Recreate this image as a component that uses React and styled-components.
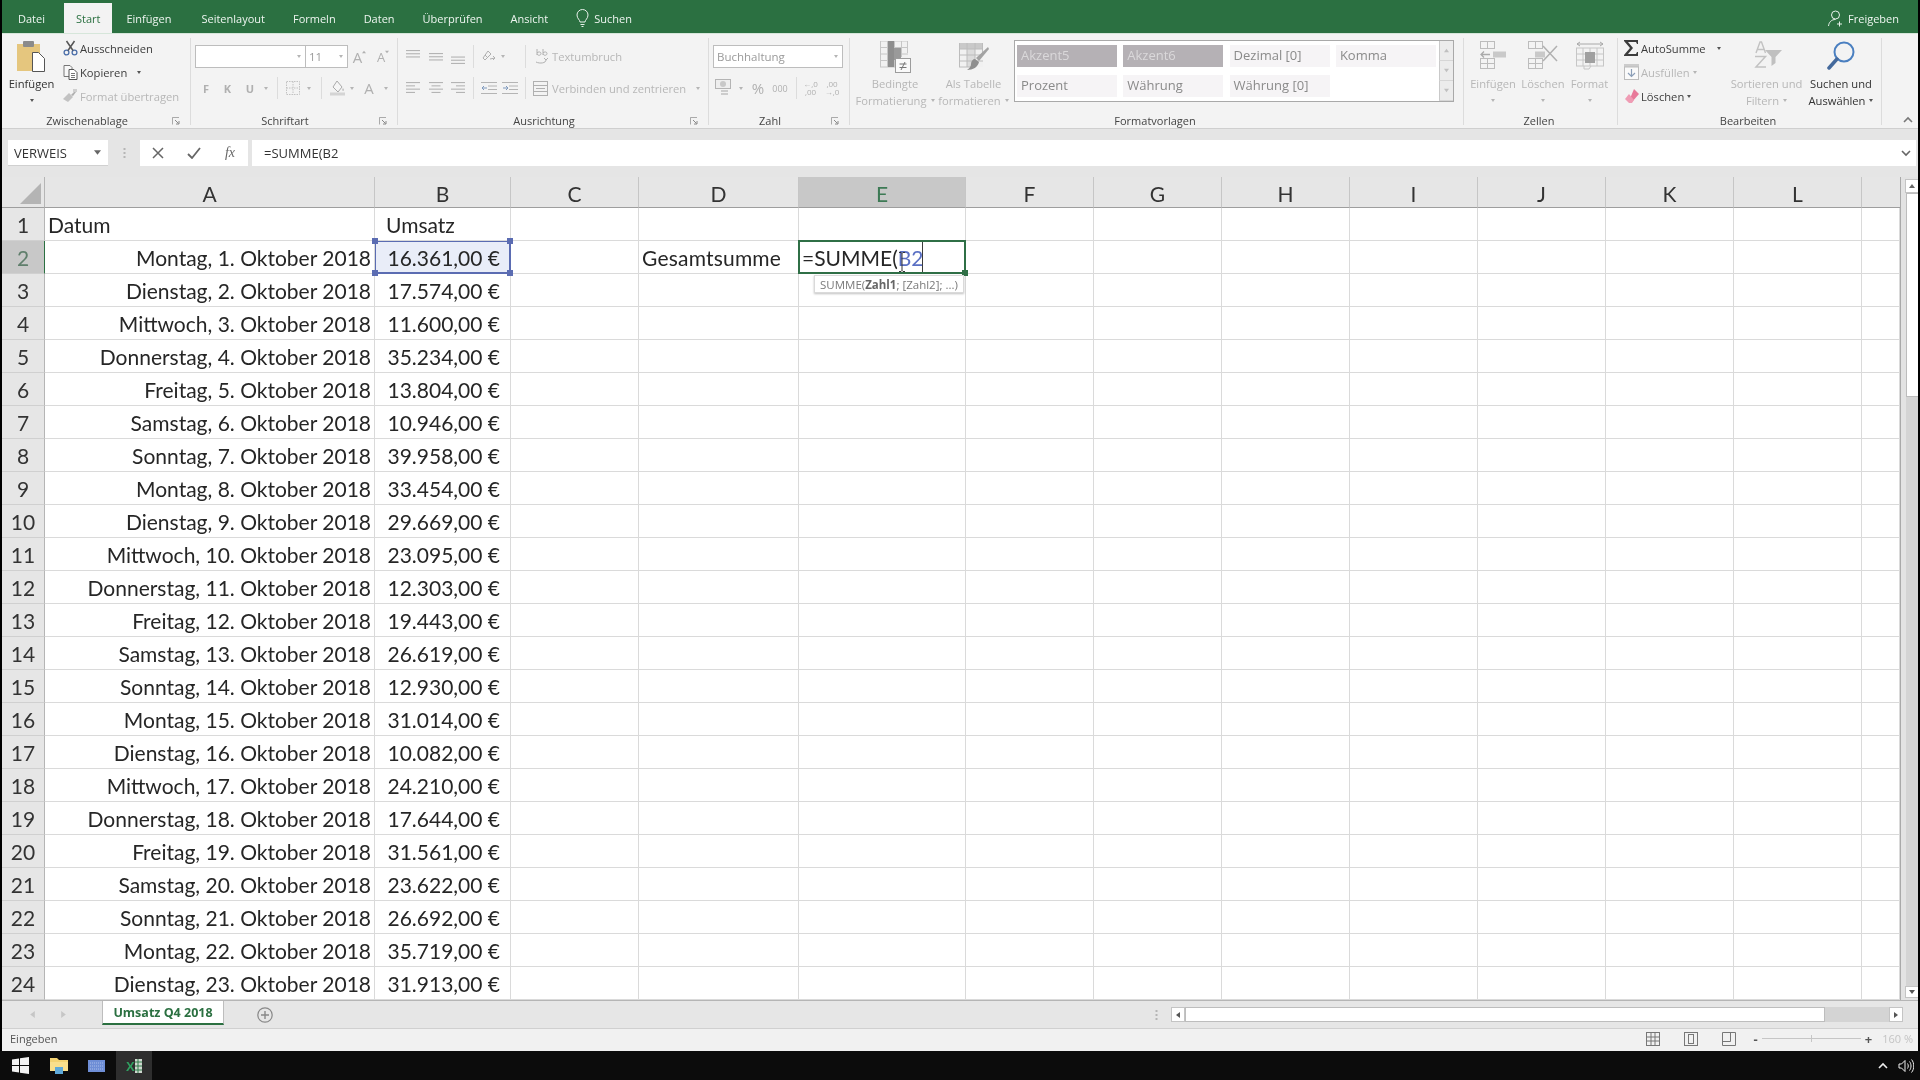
import React from "react";
import styled, { createGlobalStyle } from "styled-components";

const Global = createGlobalStyle`
  html, body { margin: 0; padding: 0; background: #000; }
  * { box-sizing: border-box; }
`;

const UI = `"Open Sans", "Liberation Sans", sans-serif`;
const SHEET = `Lato, "Liberation Sans", sans-serif`;
const GREEN = "#2b7041";
const COLS = "43px 330px 136px 128px 160px 167px repeat(7, 128px) 38px";

const Page = styled.div`
  width: 1920px; height: 1080px; background: #000; padding: 0 2px; overflow: hidden;
  display: flex; flex-direction: column; font-family: ${UI}; filter: blur(0.55px);
`;

/* title tabs */
const TabBar = styled.div`
  height: 33px; flex: none; background: ${GREEN}; display: flex; align-items: flex-end;
  padding-left: 2px; color: #eef5f0; font-size: 11px;
`;
const Tab = styled.div`
  height: 30px; display: flex; align-items: center; padding: 0 ${p => p.$pad ?? 14}px; gap: 5px;
  margin-left: ${p => p.$ml ?? 0}px;
  ${p => p.$active && `background:#f3f3f3;color:#2b7041;`}
  ${p => p.$right && `margin-left:auto;padding-right:19px;`}
`;

/* ribbon */
const Ribbon = styled.div`
  height: 96px; flex: none; background: #f3f3f3; padding-top: 4px; display: flex;
  border-top: 1px solid #d6e6da; border-bottom: 1px solid #cfcfcf; font-size: 11.2px; color: #3c3c3c;
`;
const Group = styled.div`
  width: ${p => p.$w}px; height: 87px; flex: none; display: flex; flex-direction: column;
  border-right: 1px solid #dcdcdc;
`;
const GroupBody = styled.div`
  height: 74px; display: flex; padding-left: ${p => p.$pl ?? 0}px;
`;
const GroupFoot = styled.div`
  height: 17px; margin-bottom: -4px; display: flex; align-items: center; padding-right: 3px;
`;
const GroupLabel = styled.div`
  flex: 1; text-align: center; color: #444; font-size: 11px; line-height: 16px;
`;
const LauncherBox = styled.div`
  width: 15px; height: 17px; display: flex; align-items: center;
`;
const RibbonTail = styled.div`
  flex: 1; height: 86px; display: flex; align-items: flex-end; padding: 0 0 1px 21px;
`;

const Stack = styled.div`
  width: ${p => p.$w}px; flex: none; margin-top: -2px; display: flex; flex-direction: column;
`;
const SmallBtn = styled.div`
  height: 24px; display: flex; align-items: center; white-space: nowrap;
  color: ${p => (p.$muted ? "#b7b7b7" : "#3c3c3c")};
`;
const SmallIcon = styled.div`
  width: 18px; height: 24px; margin-right: 1px; flex: none; display: flex; align-items: center; justify-content: center;
`;
const Big = styled.div`
  width: ${p => p.$w}px; flex: none; padding-top: 3px; display: flex; flex-direction: column; align-items: center;
  color: ${p => (p.$muted ? "#b7b7b7" : "#333")}; white-space: nowrap;
`;
const BigIcon = styled.div`
  height: 35px; display: flex; align-items: flex-start; justify-content: center;
`;
const BigLine = styled.div`
  height: 16.5px; line-height: 16.5px; display: flex; align-items: center; gap: 4px;
`;
const Caret = styled.span`
  display: inline-block; width: 0; height: 0; flex: none;
  border-left: 2.5px solid transparent; border-right: 2.5px solid transparent;
  border-top: 3px solid ${p => (p.$muted ? "#b5b5b5" : "#555")};
  margin-left: ${p => p.$ml ?? 0}px;
`;
const Rows = styled.div`
  display: flex; flex-direction: column; padding-top: 7px;
`;
const Row1 = styled.div`
  height: 23px; display: flex; align-items: center; margin-bottom: 9px;
`;
const Row2 = styled.div`
  height: 22px; display: flex; align-items: center;
`;
const Slot = styled.div`
  width: ${p => p.$w}px; height: 100%; flex: none; display: flex; align-items: center; justify-content: center;
  color: #b0b0b0; font-size: ${p => p.$fs ?? 11}px; font-weight: ${p => p.$fw ?? 400};
`;
const GrowMark = styled.span`
  display: flex; margin: -9px 0 0 0;
`;
const DecStack = styled.div`
  display: flex; flex-direction: column; align-items: center; font-size: 8px; line-height: 8px; color: #b0b0b0;
`;
const SepSlot = styled.div`
  width: ${p => p.$w}px; height: 100%; flex: none; display: flex; justify-content: center; margin-left: ${p => p.$ml ?? 0}px;
  &::after { content: ""; width: 1px; height: 100%; background: #dcdcdc; }
`;
const Combo = styled.div`
  width: ${p => p.$w}px; height: 23px; flex: none; background: #fff; border: 1px solid #bdbdbd;
  margin-left: ${p => p.$ml ?? 0}px;
  display: flex; align-items: center; justify-content: space-between; padding: 0 4px 0 3px;
  color: #9a9a9a; font-size: 11.5px;
`;
const MutedText = styled.span`
  color: #b7b7b7; white-space: nowrap; margin-left: ${p => p.$ml ?? 0}px;
`;
const Gallery = styled.div`
  width: 440px; height: 62px; flex: none; margin: 2px 0 0 3px; background: #fff; border: 1px solid #a9a9a9;
  display: flex;
`;
const GalleryCells = styled.div`
  flex: 1; display: grid; grid-template-columns: repeat(4, 100px); column-gap: 6.3px; row-gap: 8px;
  grid-auto-rows: 22px; padding: 4px 0 0 2px; align-content: start;
`;
const StyleCell = styled.div`
  background: ${p => (p.$dark ? "#b5b1b5" : "#f6f4f6")}; color: ${p => (p.$dark ? "#dad8da" : "#8a8a8a")};
  font-size: 13px; line-height: 21px; padding-left: 4px;
`;
const GalleryScroll = styled.div`
  width: 14px; flex: none; display: flex; flex-direction: column;
`;
const GalleryArrow = styled.div`
  flex: 1; background: #ececec; border-left: 1px solid #c9c9c9; border-bottom: 1px solid #d6d6d6;
  display: flex; align-items: center; justify-content: center;
`;

/* formula bar */
const FormulaBar = styled.div`
  height: 48px; flex: none; background: #e5e5e5; padding: 11px 0 0 6px; display: flex; align-items: flex-start;
  font-size: 13px; color: #333;
`;
const NameBox = styled.div`
  width: 100px; height: 26px; background: #fff; border-bottom: 1px solid #d0d0d0; display: flex; align-items: center;
  justify-content: space-between; padding: 0 7px 0 6px; flex: none;
`;
const Dots = styled.div`
  width: 32px; height: 26px; flex: none; display: flex; align-items: center; justify-content: center;
`;
const FxButtons = styled.div`
  width: 108px; height: 26px; flex: none; background: #fff; display: flex; align-items: center;
`;
const FxBtn = styled.div`
  width: 36px; display: flex; justify-content: center; color: #666;
  font-family: "Liberation Serif", serif; font-style: italic; font-size: 14px;
`;
const FormulaInput = styled.div`
  flex: 1; height: 26px; margin: 0 2px 0 4px; background: #fff; display: flex; align-items: center;
  justify-content: space-between; padding: 0 5px 0 12px;
`;

/* sheet */
const SheetArea = styled.div`
  height: 823px; flex: none; display: flex; background: #fff;
`;
const Sheet = styled.div`
  width: 1898px; flex: none; font-family: ${SHEET}; font-size: 21px; color: #262626;
`;
const Row = styled.div`
  display: grid; grid-template-columns: ${COLS}; height: ${p => p.$h ?? 33}px;
`;
const Corner = styled.div`
  background: #e6e6e6; border-right: 1px solid #b5b5b5; border-bottom: 1px solid #9e9e9e;
  display: flex; align-items: flex-end; justify-content: flex-end; padding: 0 3px 3px 0;
`;
const ColHead = styled.div`
  background: ${p => (p.$active ? "#c8c8c8" : "#e6e6e6")}; color: ${p => (p.$active ? "#3d7a55" : "#333")};
  border-right: 1px solid #c6c6c6; border-bottom: 1px solid #9e9e9e;
  display: flex; align-items: center; justify-content: center; padding-top: 2px;
  ${p => p.$last && "border-right:none;"}
`;
const RowHead = styled.div`
  background: ${p => (p.$active ? "#c8c8c8" : "#e6e6e6")}; color: ${p => (p.$active ? "#607f6c" : "#333")};
  border-right: 1px solid ${p => (p.$active ? "#2b7041" : "#b5b5b5")}; border-bottom: 1px solid #d0d0d0;
  display: flex; align-items: center; justify-content: center; padding-top: 1px;
`;
const Cell = styled.div`
  border-right: 1px solid #dadada; border-bottom: 1px solid #dadada; position: relative;
  display: flex; align-items: center; white-space: nowrap; padding-top: 1px;
  justify-content: ${p => (p.$right ? "flex-end" : "flex-start")};
  padding-left: ${p => p.$pl ?? 3}px; padding-right: ${p => p.$pr ?? 3}px;
  letter-spacing: ${p => p.$ls ?? 0}px;
  ${p => p.$selected && `background:#e9edf8; z-index:2; box-shadow: inset 0 0 0 1px #5b6cb2; border-color:#5b6cb2;`}
  ${p => p.$over && `z-index:3;`}
`;
const Handle = styled.span`
  position: absolute; width: 6px; height: 6px; background: #5b6cb2;
  ${p => (p.$v === "t" ? "top:-3px;" : "bottom:-3px;")}
  ${p => (p.$h === "l" ? "left:-3px;" : "right:-3px;")}
`;
const EditBox = styled.div`
  position: absolute; inset: -1px -1px -1px -1px; background: #fff; border: 2px solid #2f6f46;
  display: flex; align-items: center; padding: 1px 0 0 2px; font-size: 21px;
`;
const RefText = styled.span` color: #5a70c4; `;
const EditCaret = styled.span`
  position: absolute; left: 122px; top: 0; bottom: 0; width: 1px; background: #3c3c3c;
`;
const EditHandle = styled.span`
  position: absolute; right: -4px; bottom: -4px; width: 6px; height: 6px; background: #2f6f46;
`;
const Beam = styled.svg`
  position: absolute; left: 98px; top: 10px;
`;
const Tip = styled.div`
  position: absolute; left: 15px; top: 34px; width: 150px; height: 18px; background: #fff;
  border: 1px solid #dadada; box-shadow: 0 1px 2px rgba(0,0,0,.25);
  font-family: ${UI}; font-size: 11.5px; color: #7a7a7a; display: flex; align-items: center; padding-left: 5px;
  b { color: #666; }
`;
const VScroll = styled.div`
  flex: 1; background: #e3e3e3; border-left: 1px solid #a9a9a9; display: flex; flex-direction: column;
  padding: 2px 0 2px 4px;
`;
const ScrollBtn = styled.div`
  height: ${p => p.$h ?? 14}px; flex: none; background: #fff; border: 1px solid #c4c4c4; border-right: none;
  display: flex; align-items: center; justify-content: center; margin-top: ${p => p.$mt ?? 0}px;
`;
const ScrollThumb = styled.div`
  height: 204px; margin-left: 1px; background: #fff; border: 1px solid #bdbdbd; border-right: none; flex: none;
`;
const ScrollRest = styled.div` flex: 1; background: #d4d4d4; margin-left: 1px; `;

/* sheet tabs */
const SheetBar = styled.div`
  height: 29px; flex: none; background: #e6e6e6; display: flex; align-items: flex-start;
  border-top: 1px solid #b5b5b5; border-bottom: 1px solid #d0d0d0;
`;
const SheetNav = styled.div`
  width: 100px; height: 27px; flex: none; display: flex; align-items: center; padding-left: 27px; gap: 24px;
`;
const SheetTab = styled.div`
  width: 122px; height: 24px; background: #fff; border-bottom: 2px solid ${GREEN}; border-left: 1px solid #bdbdbd; border-right: 1px solid #bdbdbd;
  color: ${GREEN}; font-weight: 700; font-size: 12.5px; display: flex; align-items: center; justify-content: center;
`;
const AddSheet = styled.div`
  margin-left: 33px; height: 27px; display: flex; align-items: center;
`;
const SheetDots = styled.div`
  margin-left: auto; width: 24px; height: 27px; margin-right: 3px; display: flex; align-items: center; justify-content: center;
`;
const HScroll = styled.div`
  width: 732px; height: 15px; margin: 6px 15px 0 0; flex: none; display: flex;
`;
const HBtn = styled.div`
  width: 14px; flex: none; background: #fff; border: 1px solid #c4c4c4; display: flex; align-items: center; justify-content: center;
`;
const HThumb = styled.div` width: 640px; flex: none; background: #fff; border: 1px solid #bdbdbd; `;
const HRest = styled.div` flex: 1; background: #d4d4d4; `;

/* status */
const StatusBar = styled.div`
  height: 22px; flex: none; background: #f1f1f1; display: flex; align-items: center; padding: 0 0 3px 8px; font-size: 11px; color: #555;
`;
const StatusRight = styled.div`
  margin-left: auto; display: flex; align-items: center; padding-right: 5px;
`;
const ViewIcon = styled.div`
  width: 14px; height: 14px; margin-right: ${p => p.$mr ?? 24}px; flex: none; display: flex;
`;
const Zoom = styled.div`
  width: 99px; height: 1px; background: #c6c6c6; margin: 0 4px; position: relative;
  &::after { content: ""; position: absolute; left: 49px; top: -3px; width: 1px; height: 7px; background: #c6c6c6; }
`;
const ZoomSign = styled.span` color: #555; font-weight: 700; font-size: 13px; line-height: 14px; `;
const ZoomValue = styled.span` color: #c4c4c4; margin-left: 10px; font-size: 11px; `;

/* taskbar */
const Taskbar = styled.div`
  flex: 1; background: #0c0c0c; margin: 0 -2px; display: flex; align-items: center; padding-left: 12px;
`;
const TaskIcon = styled.div`
  width: ${p => p.$w}px; height: 29px; flex: none; display: flex; align-items: center; justify-content: center;
  margin-left: ${p => p.$ml ?? 0}px; background: ${p => p.$bg ?? "transparent"};
`;
const Tray = styled.div`
  margin-left: auto; display: flex; align-items: center; gap: 10px; padding-right: 6px;
`;

/* icons */
const Launcher = () => (
  <svg width="8" height="8" viewBox="0 0 8 8"><path d="M.5 3V.5H7M.5.5v7" fill="none" stroke="#aaa" /><path d="M3 3l3.5 3.5M7 4v3H4" fill="none" stroke="#888" /></svg>
);
const Paste = () => (
  <svg width="29" height="32" viewBox="0 0 29 32"><rect x="0" y="3" width="23" height="27" fill="#e5c67e" /><rect x="6" y="0" width="11" height="6" rx="1" fill="#8b8b8b" /><path d="M15.5 11.5h6l6 6v13h-12z" fill="#fff" stroke="#555" /></svg>
);
const Scissors = () => (
  <svg width="15" height="16" viewBox="0 0 15 16"><circle cx="3.5" cy="12.5" r="2.4" fill="none" stroke="#4b6ea9" strokeWidth="1.3" /><circle cx="11.5" cy="12.5" r="2.4" fill="none" stroke="#4b6ea9" strokeWidth="1.3" /><path d="M5 10.5L11.5 1M10 10.5L3.5 1" stroke="#555" strokeWidth="1.5" /></svg>
);
const CopyIcon = () => (
  <svg width="15" height="15" viewBox="0 0 15 15"><path d="M1 .5h6l2 2v9H1z" fill="#f8f8f8" stroke="#777" /><path d="M6 4.5h5l3 3v7H6z" fill="#fff" stroke="#555" /><path d="M8 8.5h4M8 10.5h4M8 12.5h4" stroke="#777" /></svg>
);
const Painter = () => (
  <svg width="16" height="14" viewBox="0 0 16 14"><path d="M1 10l6-6 4 4-5 5z" fill="#c2c2c2" /><path d="M9 6l4-4 1 1-3 4z" fill="#b0b0b0" /><rect x="11" y="0" width="4" height="3" fill="#cfcfcf" /></svg>
);
const Bulb = () => (
  <svg width="13" height="19" viewBox="0 0 13 19" fill="none" stroke="#e8f1eb" strokeWidth="1"><path d="M4 13c0-2-3-3.5-3-7a5.5 5.5 0 0111 0c0 3.500-3 5-3 7z" /><path d="M4.500 15.500h4M5.500 17.500h2" /></svg>
);
const User = () => (
  <svg width="15" height="17" viewBox="0 0 15 17" fill="none" stroke="#e8f1eb" strokeWidth="1"><circle cx="7.500" cy="5" r="4" /><path d="M.5 16c.5-4 3-6.500 7-6.500M9 14h5M11.500 11.500v5" /></svg>
);
const Lines = ({ w = 14, offs = [[0, 14], [0, 14], [0, 14]], top = 1, gap = 3.2 }) => (
  <svg width={w} height="14" viewBox="0 0 14 14">
    {offs.map((o, i) => <rect key={i} x={o[0]} y={top + i * gap} width={o[1]} height="1.100" fill="#b4b4b4" />)}
  </svg>
);
const Orient = () => (
  <svg width="15" height="15" viewBox="0 0 15 15" fill="none" stroke="#b0b0b0"><path d="M2 9l5-7 3 3-6 6zM9 10l5-1M12 7l2 2-2 2" /><path d="M4 6l3 3" /></svg>
);
const Indent = ({ flip }) => (
  <svg width="16" height="14" viewBox="0 0 16 14">
    <path d="M0 1.500h16M7 5h9M7 8.500h9M0 12.500h16" stroke="#b4b4b4" fill="none" />
    <path d={flip ? "M6 7H1M3 5L1 7l2 2" : "M1 7h5M4 5l2 2-2 2"} stroke="#7f99bd" fill="none" />
  </svg>
);
const Wrap = () => (
  <svg width="13" height="17" viewBox="0 0 13 17" fill="none" stroke="#b0b0b0"><path d="M2 1v6M2 5c1-1.500 4-1.500 4 .5S3 8 2 6M8 1v6M8 5c1-1.500 4-1.500 4 .5S9 8 8 6" /><path d="M1 14c4 2 10 1 10-2M9 10l2 2 2-2" /></svg>
);
const Merge = () => (
  <svg width="15" height="15" viewBox="0 0 15 15" fill="none" stroke="#b0b0b0"><rect x=".5" y=".5" width="14" height="14" /><path d="M.5 4.500h14M.5 10.500h14M3 7.500h9" /></svg>
);
const Borders = () => (
  <svg width="14" height="14" viewBox="0 0 14 14" fill="none" stroke="#c2c2c2" strokeDasharray="1.500 1"><rect x=".5" y=".5" width="13" height="13" /><path d="M7 .5v13M.5 7h13" /></svg>
);
const Fill = () => (
  <svg width="15" height="16" viewBox="0 0 15 16"><path d="M7 1l5 6-4 5-5-5z" fill="#f5f5f5" stroke="#aaa" /><rect x="0" y="12.500" width="15" height="3" fill="#d4d4d4" /><path d="M13 8c1 1.500 1.500 2.500 0 3-1-.5-1-1.500 0-3z" fill="#bbb" /></svg>
);
const Currency = () => (
  <svg width="18" height="18" viewBox="0 0 18 18"><rect x=".5" y=".5" width="15" height="9" fill="#eee" stroke="#b4b4b4" /><circle cx="8" cy="5" r="3" fill="#c8c8c8" /><rect x="6" y="11" width="7" height="2" fill="#ccc" /><rect x="6" y="14" width="7" height="2" fill="#ccc" /></svg>
);
const CondFmt = () => (
  <svg width="31" height="32" viewBox="0 0 31 32">
    <path d="M0 0h28v26H0z" fill="#f1f1f1" />
    <path d="M0 0h28M0 6.500h28M0 13h28M0 19.500h28M0 26h20M.5 0v26M7.500 0v26M14.500 0v26M21.500 0v16M27.500 0v12" stroke="#c6c6c6" fill="none" />
    <rect x="8" y="0" width="6" height="26" fill="#8e8e8e" /><rect x="14" y="7" width="7" height="12" fill="#9a9a9a" />
    <rect x="15.500" y="17.500" width="15" height="14" fill="#fafafa" stroke="#9c9c9c" />
    <path d="M19.500 23h7M19.500 26.500h7M25 21l-4 8" stroke="#777" fill="none" />
  </svg>
);
const TableFmt = () => (
  <svg width="30" height="32" viewBox="0 0 30 32">
    <path d="M0 2h24v24H0z" fill="#f1f1f1" /><rect x="0" y="2" width="24" height="6" fill="#c9c9c9" /><rect x="8" y="8" width="8" height="18" fill="#dcdcdc" />
    <path d="M.5 2v24M8 2v24M16 2v24M23.500 2v10M0 8h24M0 14h24M0 20h24M0 26h16" stroke="#bcbcbc" fill="none" />
    <path d="M29 6l1 2-10 12-3-3z" fill="#a3a3a3" /><path d="M16 18l4 3c-1 5-6 8-12 8 3-2 4-4 4-6 0-3 2-5 4-5z" fill="#8f8f8f" />
  </svg>
);
const CellsInsert = () => (
  <svg width="28" height="28" viewBox="0 0 28 28" fill="none" stroke="#bcbcbc"><rect x="1.500" y=".5" width="14" height="7" /><path d="M8.500.5v7" /><rect x="1.500" y="17.500" width="14" height="10" /><path d="M8.500 17.500v10M1.500 22.500h14" /><rect x="14" y="10.500" width="13" height="6" fill="#c9c9c9" stroke="none" /><path d="M11 13.500H2M5 10.500l-3 3 3 3" stroke="#aaa" strokeWidth="1.300" /></svg>
);
const CellsDelete = () => (
  <svg width="31" height="28" viewBox="0 0 31 28" fill="none" stroke="#bcbcbc"><rect x=".5" y=".5" width="14" height="7" /><path d="M7.500.5v7" /><rect x=".5" y="17.500" width="14" height="10" /><path d="M7.500 17.500v10M.5 22.500h14" /><rect x="7" y="10.500" width="10" height="6" fill="#c9c9c9" stroke="none" /><path d="M15 5l14 15M29 5L15 20" stroke="#b0b0b0" strokeWidth="1.500" /></svg>
);
const CellsFormat = () => (
  <svg width="28" height="30" viewBox="0 0 28 30" fill="none" stroke="#c6c6c6"><path d="M1 3h26M4 1L1 3l3 2M24 1l3 2-3 2" stroke="#a8a8a8" /><rect x=".5" y="7" width="27" height="18" /><path d="M7 7v18M14 7v18M21 7v18M.5 13h27M.5 19h27" /><rect x="9" y="11" width="10" height="11" fill="#a0a0a0" stroke="none" /><path d="M8 25v3h5l2-3" /></svg>
);
const Sigma = () => (
  <svg width="16" height="16" viewBox="0 0 16 16"><path d="M1 0h14v4h-1l-1-2H5l5 6-5 6h8l1-2h1v4H1v-1l6-7-6-7z" fill="#3c3c3c" /></svg>
);
const FillDown = () => (
  <svg width="15" height="16" viewBox="0 0 15 16"><rect x="0" y="0" width="15" height="3" fill="#ccc" /><rect x=".5" y="3" width="14" height="12.500" fill="#fafafa" stroke="#bcbcbc" /><path d="M7.500 5v7M4 9l3.500 3.500L11 9" fill="none" stroke="#8c9fb8" strokeWidth="1.200" /></svg>
);
const Eraser = () => (
  <svg width="15" height="15" viewBox="0 0 15 15"><path d="M10 0l5 5-7 8-3-1z" fill="#e87a9a" /><path d="M5 5L1 10l4 4h3l2-3z" fill="#ef9cb4" /></svg>
);
const SortIcon = () => (
  <svg width="30" height="28" viewBox="0 0 30 28">
    <path d="M4 12L8 1h1.500l4 11M5.500 8.500h6.500" fill="none" stroke="#c2c2c2" strokeWidth="1.400" />
    <path d="M3 15.500h10.500L4 26h10" fill="none" stroke="#c2c2c2" strokeWidth="1.500" />
    <path d="M13 9h17l-6.500 7v6l-4 3v-9z" fill="#c0c0c0" />
  </svg>
);
const Search = () => (
  <svg width="28" height="29" viewBox="0 0 28 29" fill="none"><circle cx="17" cy="11" r="9.500" stroke="#4a7fc0" strokeWidth="2" /><path d="M10 18L2 27" stroke="#44699c" strokeWidth="3.500" strokeLinecap="round" /></svg>
);
const Chevron = ({ up, color = "#777" }) => (
  <svg width="10" height="7" viewBox="0 0 10 7"><path d={up ? "M1 6l4-4 4 4" : "M1 1l4 4 4-4"} fill="none" stroke={color} strokeWidth="1.600" /></svg>
);
const Tri = ({ dir, color = "#777", s = 6 }) => {
  const d = { up: "M0 5h6L3 1z", down: "M0 1h6L3 5z", left: "M5 0v6L1 3z", right: "M1 0v6l4-3z" }[dir];
  return <svg width={s} height={s} viewBox="0 0 6 6"><path d={d} fill={color} /></svg>;
};
const Win = () => (
  <svg width="17" height="17" viewBox="0 0 17 17"><path d="M0 2.500l7-1v6.500H0zM8 1.300L17 0v8H8zM0 9h7v6.500l-7-1zM8 9h9v8l-9-1.300z" fill="#f2f2f2" /></svg>
);
const Folder = () => (
  <svg width="18" height="17" viewBox="0 0 18 17"><path d="M0 1h7l2 2h9v11H0z" fill="#f4d372" /><path d="M0 5h18v9H0z" fill="#f9df8c" /><path d="M5 10h8v7H5z" fill="#5fa9d8" /></svg>
);
const KeyIcon = () => (
  <svg width="17" height="12" viewBox="0 0 17 12"><rect width="17" height="12" fill="#6e8ed6" /><path d="M2 3h13M2 6h13M2 9h13" stroke="#a9bde9" strokeDasharray="1 1" /></svg>
);
const XlIcon = () => (
  <svg width="16" height="16" viewBox="0 0 16 16"><rect x="9" y="1" width="7" height="14" fill="#cfd8cf" /><path d="M9 4h7M9 8h7M9 12h7M12 1v14" stroke="#2f7d4a" /><text x="0" y="13" fontSize="13" fontFamily="Liberation Sans, sans-serif" fontWeight="700" fill="#2fa060">X</text></svg>
);
const Speaker = () => (
  <svg width="16" height="16" viewBox="0 0 16 16" fill="none" stroke="#eee"><path d="M1 6h2.500L7 2.500v11L3.500 10H1z" /><path d="M9.500 5.500c1 1.500 1 3.500 0 5M11.500 3.500c2 2.500 2 6.500 0 9M13.500 1.500c3 3.500 3 9.500 0 13" /></svg>
);

const DATA = [
  ["Montag, 1.", "16.361"], ["Dienstag, 2.", "17.574"], ["Mittwoch, 3.", "11.600"], ["Donnerstag, 4.", "35.234"],
  ["Freitag, 5.", "13.804"], ["Samstag, 6.", "10.946"], ["Sonntag, 7.", "39.958"], ["Montag, 8.", "33.454"],
  ["Dienstag, 9.", "29.669"], ["Mittwoch, 10.", "23.095"], ["Donnerstag, 11.", "12.303"], ["Freitag, 12.", "19.443"],
  ["Samstag, 13.", "26.619"], ["Sonntag, 14.", "12.930"], ["Montag, 15.", "31.014"], ["Dienstag, 16.", "10.082"],
  ["Mittwoch, 17.", "24.210"], ["Donnerstag, 18.", "17.644"], ["Freitag, 19.", "31.561"], ["Samstag, 20.", "23.622"],
  ["Sonntag, 21.", "26.692"], ["Montag, 22.", "35.719"], ["Dienstag, 23.", "31.913"],
];
const LETTERS = ["A", "B", "C", "D", "E", "F", "G", "H", "I", "J", "K", "L", ""];
const TABS = ["Datei", "Start", "Einfügen", "Seitenlayout", "Formeln", "Daten", "Überprüfen", "Ansicht"];
const TAB_SHIFT = { Start: 5, Seitenlayout: 2 };

const Foot = ({ label, launcher }) => (
  <GroupFoot>
    <GroupLabel>{label}</GroupLabel>
    {launcher && <LauncherBox><Launcher /></LauncherBox>}
  </GroupFoot>
);

const EmptyCells = ({ from }) => LETTERS.slice(from).map((l, i) => <Cell key={i} />);

export default function App() {
  return (
    <Page>
      <Global />
      <TabBar>
        {TABS.map(t => <Tab key={t} $active={t === "Start"} $ml={TAB_SHIFT[t]} $pad={t === "Start" ? 12 : 14}>{t}</Tab>)}
        <Tab><Bulb />Suchen</Tab>
        <Tab $right><User />Freigeben</Tab>
      </TabBar>

      <Ribbon>
        <Group $w={189}>
          <GroupBody>
            <Big $w={59}>
              <BigIcon><Paste /></BigIcon>
              <BigLine>Einfügen</BigLine>
              <BigLine><Caret /></BigLine>
            </Big>
            <Stack $w={126}>
              <SmallBtn><SmallIcon><Scissors /></SmallIcon>Ausschneiden</SmallBtn>
              <SmallBtn><SmallIcon><CopyIcon /></SmallIcon>Kopieren<Caret $ml={10} /></SmallBtn>
              <SmallBtn $muted><SmallIcon><Painter /></SmallIcon>Format übertragen</SmallBtn>
            </Stack>
          </GroupBody>
          <Foot label="Zwischenablage" launcher />
        </Group>

        <Group $w={207}>
          <GroupBody $pl={4}>
            <Rows>
              <Row1>
                <Combo $w={111}><span /><Caret $muted /></Combo>
                <Combo $w={43} $ml={-1}>11<Caret $muted /></Combo>
                <Slot $w={23} $fs={15}>A<GrowMark><Tri dir="up" color="#b0b0b0" s={4} /></GrowMark></Slot>
                <Slot $w={24} $fs={13}>A<GrowMark><Tri dir="down" color="#b0b0b0" s={4} /></GrowMark></Slot>
              </Row1>
              <Row2>
                <Slot $w={22} $fw={700}>F</Slot>
                <Slot $w={21} $fw={700}>K</Slot>
                <Slot $w={24} $fw={700}>U</Slot>
                <Slot $w={8}><Caret $muted /></Slot>
                <SepSlot $w={15} />
                <Slot $w={16}><Borders /></Slot>
                <Slot $w={15}><Caret $muted /></Slot>
                <SepSlot $w={11} />
                <Slot $w={21}><Fill /></Slot>
                <Slot $w={8}><Caret $muted /></Slot>
                <Slot $w={26} $fs={15}>A</Slot>
                <Slot $w={8}><Caret $muted /></Slot>
              </Row2>
            </Rows>
          </GroupBody>
          <Foot label="Schriftart" launcher />
        </Group>

        <Group $w={311}>
          <GroupBody $pl={4}>
            <Rows>
              <Row1>
                <Slot $w={22}><Lines top={0} /></Slot>
                <Slot $w={23}><Lines top={3} /></Slot>
                <Slot $w={21}><Lines top={6.500} /></Slot>
                <SepSlot $w={10} />
                <Slot $w={21}><Orient /></Slot>
                <Slot $w={8}><Caret $muted /></Slot>
                <SepSlot $w={16} $ml={10} />
                <Slot $w={16}><Wrap /></Slot>
                <MutedText $ml={3}>Textumbruch</MutedText>
              </Row1>
              <Row2>
                <Slot $w={22}><Lines offs={[[0, 14], [0, 9], [0, 14], [0, 9]]} top={1} gap={3.300} /></Slot>
                <Slot $w={23}><Lines offs={[[0, 14], [2.500, 9], [0, 14], [2.500, 9]]} top={1} gap={3.300} /></Slot>
                <Slot $w={21}><Lines offs={[[0, 14], [5, 9], [0, 14], [5, 9]]} top={1} gap={3.300} /></Slot>
                <SepSlot $w={10} />
                <Slot $w={21}><Indent flip /></Slot>
                <Slot $w={22}><Indent /></Slot>
                <SepSlot $w={8} />
                <Slot $w={23}><Merge /></Slot>
                <MutedText>Verbinden und zentrieren</MutedText>
                <Caret $muted $ml={10} />
              </Row2>
            </Rows>
          </GroupBody>
          <Foot label="Ausrichtung" launcher />
        </Group>

        <Group $w={141}>
          <GroupBody $pl={4}>
            <Rows>
              <Row1><Combo $w={130}>Buchhaltung<Caret $muted /></Combo></Row1>
              <Row2>
                <Slot $w={22}><Currency /></Slot>
                <Slot $w={12}><Caret $muted /></Slot>
                <Slot $w={22} $fs={15}>%</Slot>
                <Slot $w={22} $fs={9}>000</Slot>
                <SepSlot $w={10} />
                <Slot $w={19}><DecStack><span>←,0</span><span>,00</span></DecStack></Slot>
                <Slot $w={24}><DecStack><span>,00</span><span>→,0</span></DecStack></Slot>
              </Row2>
            </Rows>
          </GroupBody>
          <Foot label="Zahl" launcher />
        </Group>

        <Group $w={614}>
          <GroupBody $pl={4}>
            <Big $w={82} $muted>
              <BigIcon><CondFmt /></BigIcon>
              <BigLine>Bedingte</BigLine>
              <BigLine>Formatierung<Caret $muted /></BigLine>
            </Big>
            <Big $w={75} $muted>
              <BigIcon><TableFmt /></BigIcon>
              <BigLine>Als Tabelle</BigLine>
              <BigLine>formatieren<Caret $muted /></BigLine>
            </Big>
            <Gallery>
              <GalleryCells>
                <StyleCell $dark>Akzent5</StyleCell>
                <StyleCell $dark>Akzent6</StyleCell>
                <StyleCell>Dezimal [0]</StyleCell>
                <StyleCell>Komma</StyleCell>
                <StyleCell>Prozent</StyleCell>
                <StyleCell>Währung</StyleCell>
                <StyleCell>Währung [0]</StyleCell>
              </GalleryCells>
              <GalleryScroll>
                <GalleryArrow><Tri dir="up" color="#c0c0c0" s={5} /></GalleryArrow>
                <GalleryArrow><Tri dir="down" color="#c0c0c0" s={5} /></GalleryArrow>
                <GalleryArrow><Tri dir="down" color="#c0c0c0" s={5} /></GalleryArrow>
              </GalleryScroll>
            </Gallery>
          </GroupBody>
          <Foot label="Formatvorlagen" />
        </Group>

        <Group $w={154}>
          <GroupBody $pl={4}>
            <Big $w={50} $muted><BigIcon><CellsInsert /></BigIcon><BigLine>Einfügen</BigLine><BigLine><Caret $muted /></BigLine></Big>
            <Big $w={50} $muted><BigIcon><CellsDelete /></BigIcon><BigLine>Löschen</BigLine><BigLine><Caret $muted /></BigLine></Big>
            <Big $w={43} $muted><BigIcon><CellsFormat /></BigIcon><BigLine>Format</BigLine><BigLine><Caret $muted /></BigLine></Big>
          </GroupBody>
          <Foot label="Zellen" />
        </Group>

        <Group $w={264}>
          <GroupBody $pl={4}>
            <Stack $w={107}>
              <SmallBtn><SmallIcon><Sigma /></SmallIcon>AutoSumme<Caret $ml={11} /></SmallBtn>
              <SmallBtn $muted><SmallIcon><FillDown /></SmallIcon>Ausfüllen<Caret $muted $ml={3} /></SmallBtn>
              <SmallBtn><SmallIcon><Eraser /></SmallIcon>Löschen<Caret $ml={3} /></SmallBtn>
            </Stack>
            <Big $w={75} $muted><BigIcon><SortIcon /></BigIcon><BigLine>Sortieren und</BigLine><BigLine>Filtern<Caret $muted /></BigLine></Big>
            <Big $w={74}><BigIcon><Search /></BigIcon><BigLine>Suchen und</BigLine><BigLine>Auswählen<Caret /></BigLine></Big>
          </GroupBody>
          <Foot label="Bearbeiten" />
        </Group>
        <RibbonTail><Chevron up /></RibbonTail>
      </Ribbon>

      <FormulaBar>
        <NameBox>VERWEIS<Tri dir="down" color="#666" s={7} /></NameBox>
        <Dots><svg width="3" height="12" viewBox="0 0 3 12"><path d="M1.500 1v2M1.500 5v2M1.500 9v2" stroke="#b5b5b5" strokeWidth="2" /></svg></Dots>
        <FxButtons>
          <FxBtn><svg width="12" height="12" viewBox="0 0 12 12"><path d="M1 1l10 10M11 1L1 11" stroke="#666" strokeWidth="1.500" /></svg></FxBtn>
          <FxBtn><svg width="14" height="12" viewBox="0 0 14 12"><path d="M1 7l4 4 8-10" fill="none" stroke="#666" strokeWidth="1.800" /></svg></FxBtn>
          <FxBtn>fx</FxBtn>
        </FxButtons>
        <FormulaInput>=SUMME(B2<Chevron color="#666" /></FormulaInput>
      </FormulaBar>

      <SheetArea>
        <Sheet>
          <Row $h={31}>
            <Corner><svg width="21" height="21" viewBox="0 0 21 21"><path d="M21 0v21H0z" fill="#b4b4b4" /></svg></Corner>
            {LETTERS.map((l, i) => <ColHead key={i} $active={l === "E"} $last={l === ""}>{l}</ColHead>)}
          </Row>
          <Row>
            <RowHead>1</RowHead>
            <Cell>Datum</Cell>
            <Cell $pl={11}>Umsatz</Cell>
            <EmptyCells from={2} />
          </Row>
          {DATA.map(([d, v], i) => {
            const n = i + 2;
            const first = n === 2;
            return (
              <Row key={n}>
                <RowHead $active={first}>{n}</RowHead>
                <Cell $right>{d} Oktober 2018</Cell>
                <Cell $right $pr={10} $selected={first}>
                  {v},00 €
                  {first && <>
                    <Handle $v="t" $h="l" /><Handle $v="t" $h="r" /><Handle $v="b" $h="l" /><Handle $v="b" $h="r" />
                  </>}
                </Cell>
                <Cell />
                {first ? <Cell $pl={3} $ls={0.2}>Gesamtsumme</Cell> : <Cell />}
                {first ? (
                  <Cell $over>
                    <EditBox>=SUMME(<RefText>B2</RefText>
                      <EditCaret />
                      <EditHandle />
                      <Beam width="8" height="20" viewBox="0 0 8 20"><path d="M1 .5h2l1 1 1-1h2M4 1.500v17M1 19.500h2l1-1 1 1h2" fill="none" stroke="#333" /></Beam>
                    </EditBox>
                    <Tip>SUMME(<b>Zahl1</b>; [Zahl2]; ...)</Tip>
                  </Cell>
                ) : <Cell />}
                <EmptyCells from={5} />
              </Row>
            );
          })}
        </Sheet>
        <VScroll>
          <ScrollBtn><Tri dir="up" color="#666" /></ScrollBtn>
          <ScrollThumb />
          <ScrollRest />
          <ScrollBtn $h={12}><Tri dir="down" color="#555" /></ScrollBtn>
        </VScroll>
      </SheetArea>

      <SheetBar>
        <SheetNav><Tri dir="left" color="#c6c6c6" s={7} /><Tri dir="right" color="#c6c6c6" s={7} /></SheetNav>
        <SheetTab>Umsatz Q4 2018</SheetTab>
        <AddSheet><svg width="16" height="16" viewBox="0 0 16 16" fill="none" stroke="#888"><circle cx="8" cy="8" r="7.200" strokeWidth="1.200" /><path d="M8 4v8M4 8h8" strokeWidth="1.400" /></svg></AddSheet>
        <SheetDots><svg width="3" height="12" viewBox="0 0 3 12"><path d="M1.500 1v2M1.500 5v2M1.500 9v2" stroke="#b5b5b5" strokeWidth="2" /></svg></SheetDots>
        <HScroll>
          <HBtn><Tri dir="left" color="#555" /></HBtn>
          <HThumb />
          <HRest />
          <HBtn><Tri dir="right" color="#555" /></HBtn>
        </HScroll>
      </SheetBar>

      <StatusBar>
        Eingeben
        <StatusRight>
          <ViewIcon>
            <svg width="14" height="14" viewBox="0 0 14 14" fill="none" stroke="#777"><rect x=".5" y=".5" width="13" height="13" /><path d="M5 .5v13M9 .5v13M.5 5h13M.5 9h13" /></svg>
          </ViewIcon>
          <ViewIcon>
            <svg width="14" height="14" viewBox="0 0 14 14" fill="none" stroke="#777"><rect x=".5" y=".5" width="13" height="13" /><rect x="4.500" y="2.500" width="5" height="9" /></svg>
          </ViewIcon>
          <ViewIcon $mr={18}>
            <svg width="14" height="14" viewBox="0 0 14 14" fill="none" stroke="#777"><path d="M.5 .5h13v13H.5zM.5 9.500h8v-9" /></svg>
          </ViewIcon>
          <ZoomSign>-</ZoomSign>
          <Zoom />
          <ZoomSign>+</ZoomSign>
          <ZoomValue>160 %</ZoomValue>
        </StatusRight>
      </StatusBar>

      <Taskbar>
        <TaskIcon $w={17}><Win /></TaskIcon>
        <TaskIcon $w={18} $ml={21}><Folder /></TaskIcon>
        <TaskIcon $w={17} $ml={20}><KeyIcon /></TaskIcon>
        <TaskIcon $w={36} $ml={11} $bg="#2e2e2e"><XlIcon /></TaskIcon>
        <Tray>
          <Chevron up color="#eee" />
          <Speaker />
        </Tray>
      </Taskbar>
    </Page>
  );
}
